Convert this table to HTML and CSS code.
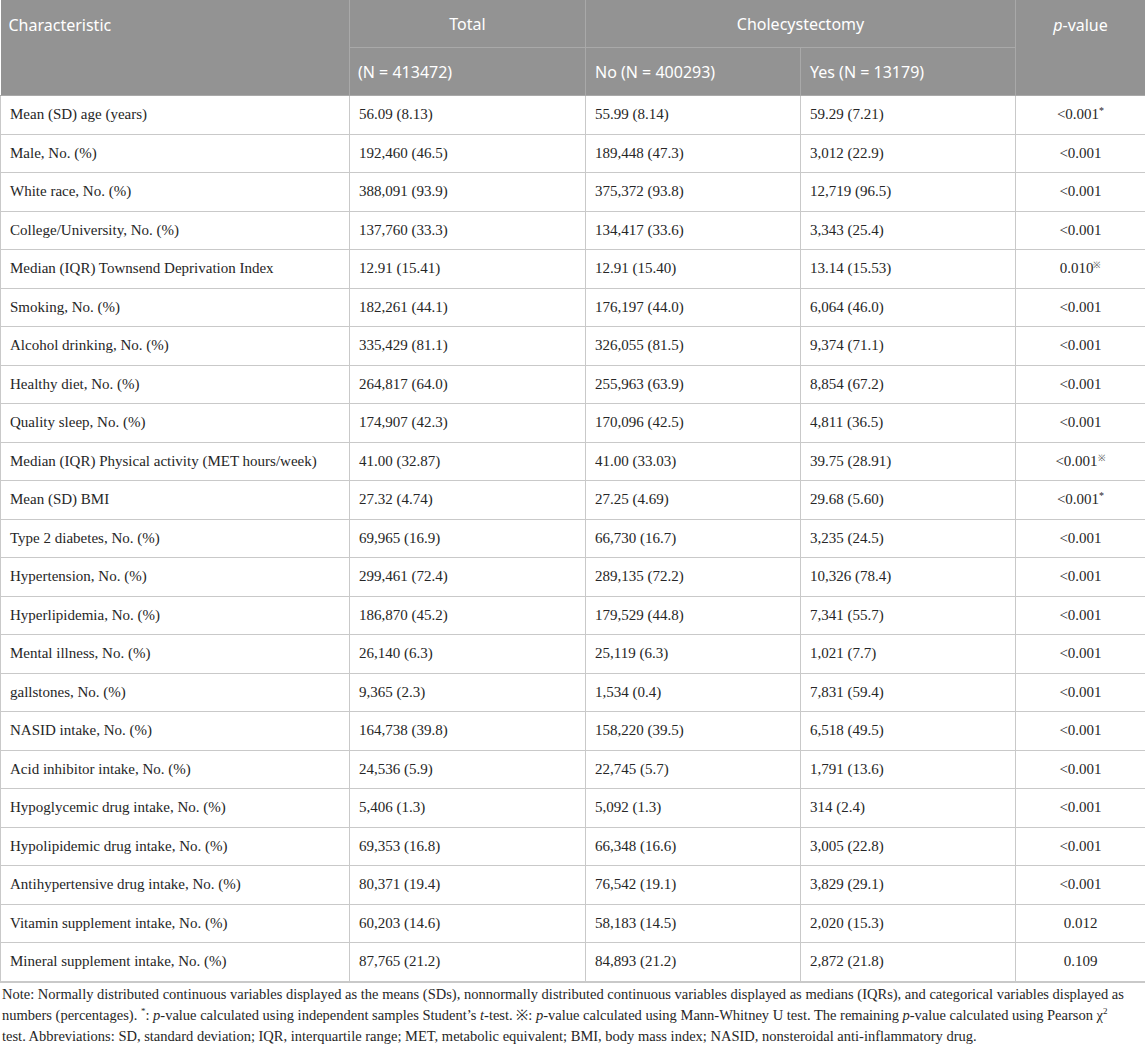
FILE: index.html
```html
<!DOCTYPE html>
<html>
<head>
<meta charset="utf-8">
<link rel="stylesheet" href="styles.css">
</head>
<body>
<table class="tbl">
  <colgroup>
    <col class="c1"><col class="c2"><col class="c3"><col class="c4"><col class="c5">
  </colgroup>
  <thead>
    <tr class="h1">
      <th rowspan="2" class="left top">Characteristic</th>
      <th class="center">Total</th>
      <th colspan="2" class="center">Cholecystectomy</th>
      <th rowspan="2" class="center top"><i>p</i>-value</th>
    </tr>
    <tr class="h2">
      <th class="left">(N = 413472)</th>
      <th class="left">No (N = 400293)</th>
      <th class="left">Yes (N = 13179)</th>
    </tr>
  </thead>
  <tbody>
    <tr><td>Mean (SD) age (years)</td><td>56.09 (8.13)</td><td>55.99 (8.14)</td><td>59.29 (7.21)</td><td class="p">&lt;0.001<sup>*</sup></td></tr>
    <tr><td>Male, No. (%)</td><td>192,460 (46.5)</td><td>189,448 (47.3)</td><td>3,012 (22.9)</td><td class="p">&lt;0.001</td></tr>
    <tr><td>White race, No. (%)</td><td>388,091 (93.9)</td><td>375,372 (93.8)</td><td>12,719 (96.5)</td><td class="p">&lt;0.001</td></tr>
    <tr><td>College/University, No. (%)</td><td>137,760 (33.3)</td><td>134,417 (33.6)</td><td>3,343 (25.4)</td><td class="p">&lt;0.001</td></tr>
    <tr><td>Median (IQR) Townsend Deprivation Index</td><td>12.91 (15.41)</td><td>12.91 (15.40)</td><td>13.14 (15.53)</td><td class="p">0.010<sup class="km">※</sup></td></tr>
    <tr><td>Smoking, No. (%)</td><td>182,261 (44.1)</td><td>176,197 (44.0)</td><td>6,064 (46.0)</td><td class="p">&lt;0.001</td></tr>
    <tr><td>Alcohol drinking, No. (%)</td><td>335,429 (81.1)</td><td>326,055 (81.5)</td><td>9,374 (71.1)</td><td class="p">&lt;0.001</td></tr>
    <tr><td>Healthy diet, No. (%)</td><td>264,817 (64.0)</td><td>255,963 (63.9)</td><td>8,854 (67.2)</td><td class="p">&lt;0.001</td></tr>
    <tr><td>Quality sleep, No. (%)</td><td>174,907 (42.3)</td><td>170,096 (42.5)</td><td>4,811 (36.5)</td><td class="p">&lt;0.001</td></tr>
    <tr><td>Median (IQR) Physical activity (MET hours/week)</td><td>41.00 (32.87)</td><td>41.00 (33.03)</td><td>39.75 (28.91)</td><td class="p">&lt;0.001<sup class="km">※</sup></td></tr>
    <tr><td>Mean (SD) BMI</td><td>27.32 (4.74)</td><td>27.25 (4.69)</td><td>29.68 (5.60)</td><td class="p">&lt;0.001<sup>*</sup></td></tr>
    <tr><td>Type 2 diabetes, No. (%)</td><td>69,965 (16.9)</td><td>66,730 (16.7)</td><td>3,235 (24.5)</td><td class="p">&lt;0.001</td></tr>
    <tr><td>Hypertension, No. (%)</td><td>299,461 (72.4)</td><td>289,135 (72.2)</td><td>10,326 (78.4)</td><td class="p">&lt;0.001</td></tr>
    <tr><td>Hyperlipidemia, No. (%)</td><td>186,870 (45.2)</td><td>179,529 (44.8)</td><td>7,341 (55.7)</td><td class="p">&lt;0.001</td></tr>
    <tr><td>Mental illness, No. (%)</td><td>26,140 (6.3)</td><td>25,119 (6.3)</td><td>1,021 (7.7)</td><td class="p">&lt;0.001</td></tr>
    <tr><td>gallstones, No. (%)</td><td>9,365 (2.3)</td><td>1,534 (0.4)</td><td>7,831 (59.4)</td><td class="p">&lt;0.001</td></tr>
    <tr><td>NASID intake, No. (%)</td><td>164,738 (39.8)</td><td>158,220 (39.5)</td><td>6,518 (49.5)</td><td class="p">&lt;0.001</td></tr>
    <tr><td>Acid inhibitor intake, No. (%)</td><td>24,536 (5.9)</td><td>22,745 (5.7)</td><td>1,791 (13.6)</td><td class="p">&lt;0.001</td></tr>
    <tr><td>Hypoglycemic drug intake, No. (%)</td><td>5,406 (1.3)</td><td>5,092 (1.3)</td><td>314 (2.4)</td><td class="p">&lt;0.001</td></tr>
    <tr><td>Hypolipidemic drug intake, No. (%)</td><td>69,353 (16.8)</td><td>66,348 (16.6)</td><td>3,005 (22.8)</td><td class="p">&lt;0.001</td></tr>
    <tr><td>Antihypertensive drug intake, No. (%)</td><td>80,371 (19.4)</td><td>76,542 (19.1)</td><td>3,829 (29.1)</td><td class="p">&lt;0.001</td></tr>
    <tr><td>Vitamin supplement intake, No. (%)</td><td>60,203 (14.6)</td><td>58,183 (14.5)</td><td>2,020 (15.3)</td><td class="p">0.012</td></tr>
    <tr><td>Mineral supplement intake, No. (%)</td><td>87,765 (21.2)</td><td>84,893 (21.2)</td><td>2,872 (21.8)</td><td class="p">0.109</td></tr>
  </tbody>
</table>
<p class="note">Note: Normally distributed continuous variables displayed as the means (SDs), nonnormally distributed continuous variables displayed as medians (IQRs), and categorical variables displayed as numbers (percentages). <sup>*</sup>: <i>p</i>-value calculated using independent samples Student’s <i>t</i>-test. ※: <i>p</i>-value calculated using Mann-Whitney U test. The remaining <i>p</i>-value calculated using Pearson χ<sup>2</sup><br>test. Abbreviations: SD, standard deviation; IQR, interquartile range; MET, metabolic equivalent; BMI, body mass index; NASID, nonsteroidal anti-inflammatory drug.</p>
</body>
</html>
```
FILE: styles.css
```css
html, body {
  margin: 0;
  padding: 0;
  background: #ffffff;
}

.tbl {
  width: 1145px;
  border-collapse: collapse;
  table-layout: fixed;
  font-family: "Liberation Serif", "DejaVu Serif", serif;
  font-size: 15px;
  color: #262626;
}

.c1 { width: 349px; }
.c2 { width: 236px; }
.c3 { width: 215px; }
.c4 { width: 215px; }
.c5 { width: 130px; }

.tbl th {
  background: #939393;
  color: #ffffff;
  font-family: "Noto Sans", "Open Sans", sans-serif;
  font-weight: 400;
  font-size: 16px;
  border: 1px solid #a9a9a9;
  border-top: none;
  padding: 0 9px;
  line-height: 24px;
}

.tbl th:first-child {
  border-left: none;
  padding-left: 8px;
}

.tbl .h1 th {
  height: 47px;
  vertical-align: middle;
}

.tbl .h2 th {
  height: 47px;
  vertical-align: middle;
}

.tbl th.top {
  vertical-align: top;
  padding-top: 13px;
}

.tbl th.left { text-align: left; }
.tbl th.center { text-align: center; }

.tbl td {
  border: 1px solid #c9c9c9;
  height: 37.5px;
  padding: 0 9px;
  vertical-align: middle;
  white-space: nowrap;
}

.tbl tbody tr:last-child td {
  border-bottom: 2px solid #c9c9c9;
}

.tbl td.p { text-align: center; }

.tbl sup {
  font-size: 10px;
  line-height: 0;
  vertical-align: 5px;
}

.tbl sup.km {
  font-size: 9px;
  color: #555;
}

.note {
  margin: 1px 4px 0 2px;
  font-family: "Liberation Serif", "DejaVu Serif", serif;
  font-size: 14.5px;
  line-height: 21px;
  color: #262626;
}

.note sup {
  font-size: 9px;
  line-height: 0;
  vertical-align: 6px;
}
```
